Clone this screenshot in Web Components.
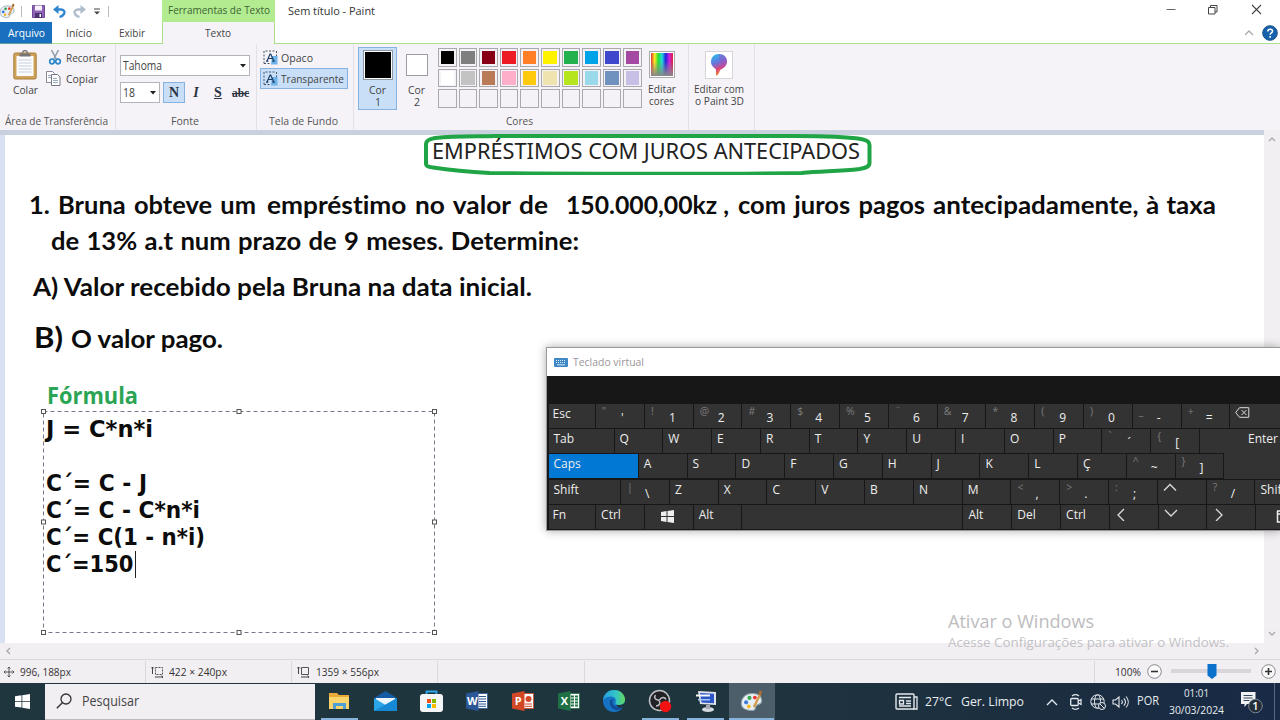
<!DOCTYPE html>
<html lang="pt">
<head>
<meta charset="utf-8">
<title>Sem título - Paint</title>
<style>
html,body{margin:0;width:1280px;height:720px;overflow:hidden;background:#fff}
body{font-family:"Open Sans","Noto Sans",sans-serif;font-size:12px;color:#333}
</style>
</head>
<body>
<paint-desktop></paint-desktop>
<script>
const define=(name,html,after)=>customElements.define(name,class extends HTMLElement{
  connectedCallback(){
    if(this.shadowRoot)return;
    this.attachShadow({mode:'open'}).innerHTML=typeof html==='function'?html(this):html;
    if(after)after(this);
  }
});
const T=(text,w,size=11.5,lh=16,style='')=>`<fit-text w="${w}" style="font-size:${size}px;line-height:${lh}px;${style}">${text}</fit-text>`;
const svg=(w,h,body,style='',vb)=>`<svg width="${w}" height="${h}" viewBox="${vb||`0 0 ${w} ${h}`}" style="display:block;flex:none;${style}" fill="none">${body}</svg>`;

/* Text run stretched or condensed to a given width */
define('fit-text',`<style>:host{display:block;flex:none;white-space:pre;font-variant-ligatures:none}span{display:inline-block;transform-origin:0 0;white-space:pre}</style><span><slot></slot></span>`,el=>{
  const w=+el.getAttribute('w'),s=el.shadowRoot.querySelector('span');
  el.style.width=w+'px';
  const n=s.getBoundingClientRect().width;
  if(n)s.style.transform=`scaleX(${w/n})`;
});

const palette=`<path d="M1 10C1 5 5 2 10 2.500c4 .3 6 2.500 6 5.500 0 3-3 2-4 3.500s0 3.500-3 3.500C4 15 1 13 1 10Z" fill="#e8eef2" stroke="#8da3b0" stroke-width=".8"/><circle cx="4.500" cy="9" r="1.500" fill="#3b78d8"/><circle cx="7" cy="5.700" r="1.500" fill="#35a853"/><circle cx="11" cy="5.500" r="1.400" fill="#e33"/><circle cx="6.500" cy="12" r="1.400" fill="#f3b921"/><path d="m9.500 12 4.500-9 1.500.8L11 13Z" fill="#d59a4b"/><path d="m13.500 3 1-3 2 1-1 3Z" fill="#a86c34"/>`;

define('title-bar',`<style>
:host{display:flex;height:22px;background:#fff;flex:none}
.quick{width:162px;display:flex;align-items:center}
.ctx{width:113px;background:#b3ec90;display:flex;justify-content:center;color:#3c6334}
.t{flex:1;display:flex;padding-left:13px;color:#333}
.win{display:flex;padding-top:4px}
i{width:1px;height:11px;background:#bbb}
</style>
<div class="quick">
${svg(16,16,palette,'margin-left:-1px','0 0 17 16')}<i style="margin-left:6px"></i>
${svg(13,13,'<path d="M.5.5h12v12H.5Z" fill="#8e63b5" stroke="#6f4a94"/><path d="M3 .5h7v5H3Z" fill="#f6f1fa"/><path d="M3 8h7v5H3Z" fill="#4d3470"/><path d="M7.500 9h1.500v3H7.500Z" fill="#fff"/>','margin-left:10px')}
${svg(13,13,'<path d="M3 4.500h5c5.500.5 4 6-1.500 7.500" stroke="#2f86cf" stroke-width="2.300"/><path d="M0 4.500 5.500 0v9Z" fill="#2f86cf"/>','margin-left:8px')}
${svg(13,13,'<path d="M10 4.500H5c-5.500.5-4 6 1.500 7.500" stroke="#aebccb" stroke-width="2.300"/><path d="M13 4.500 7.500 0v9Z" fill="#aebccb"/>','margin-left:7px')}
${svg(8,8,'<path d="M1 1h6" stroke="#444"/><path d="M1 3.500h6L4 6.500Z" fill="#444"/>','margin-left:7px;margin-top:2px')}<i style="margin-left:7px"></i>
</div>
<div class="ctx">${T('Ferramentas de Texto',102,11.5,19)}</div>
<div class="t">${T('Sem título - Paint',87,11.5,22)}</div>
<div class="win">${svg(110,14,'<path d="M2.500 5.500h9" stroke="#666"/><path d="M44.500 3.500h6.500v6.500h-6.500ZM46.500 3.500v-2h6.500v6.500h-2" stroke="#444"/><path d="m88 1 9 9m0-9-9 9" stroke="#444" stroke-width="1.100"/>','margin-right:6px')}</div>`);

define('ribbon-tabs',`<style>
:host{display:flex;height:22px;flex:none;box-sizing:border-box}
div{box-sizing:border-box;border-bottom:1px solid #abdf8c;display:flex;justify-content:center;color:#444}
.file{width:52px;background:#1a6fbe;color:#fff;border-color:#5b9c9c}
.on{width:113px;background:#f5f3f8;border:1px solid #abdf8c;border-width:0 1px;padding-right:2px}
.rest{flex:1;justify-content:flex-end;align-items:center}
</style>
<div class="file">${T('Arquivo',37,11.5,21)}</div>
<div style="width:53px">${T('Início',26,11.5,21)}</div>
<div style="width:57px;padding-right:3px">${T('Exibir',26,11.5,21)}</div>
<div class="on">${T('Texto',26,11.5,21)}</div>
<div class="rest">${svg(34,18,'<path d="m0 11 4-4 4 4" stroke="#aaa" stroke-width="1.300"/><circle cx="25" cy="9" r="7.300" fill="#1762ad" stroke="#1b4f87"/><path d="M22.800 7.500c0-3 4.700-3 4.700-.3 0 1.800-2.300 1.700-2.300 3.500m0 1.200v1.800" stroke="#fff" stroke-width="1.600"/>','margin-right:1px')}</div>`);

define('ribbon-group',el=>`<style>
:host{display:flex;flex-direction:column;box-sizing:border-box;height:86px;border-right:1px solid #e3e0e8;flex:none;width:${el.getAttribute('width')}px;color:#444}
.c{height:69px;display:flex;box-sizing:border-box}
.l{display:flex;justify-content:center;color:#555;padding-right:3px}
</style><div class="c"><slot></slot></div><div class="l">${el.getAttribute('lw')?T(el.getAttribute('label'),el.getAttribute('lw'),11.3,16):''}</div>`);

define('color-swatch',el=>`<style>:host{display:block;box-sizing:border-box;width:18.600px;height:18.600px;border:1px solid #a9a8ad;padding:1.500px;background:#f4f2f7}
div{height:100%;background:${el.getAttribute('color')||'transparent'}}</style><div></div>`);

const board=svg(24,30,'<rect x=".8" y="3" width="22.400" height="26" rx="1.500" fill="#cfa25a" stroke="#a97d3c"/><path d="M3.500 6h17v20h-17Z" fill="#fdfdff"/><path d="M5.500 10h13M5.500 13h13M5.500 16h13M5.500 19h13M5.500 22h13" stroke="#c4cfdc"/><path d="M6.500 3.500h11v3h-11Z" fill="#777"/><path d="M9.500 3.500c0-4 5-4 5 0" stroke="#777" stroke-width="1.300"/>');
const bgIcon=c=>svg(15,15,`<path d="M1 13.500V1h12" stroke="#456" stroke-dasharray="2 1.500"/><path d="M13.500 1v5" stroke="#456" stroke-dasharray="2 1.500"/><path d="M1 13.500h7" stroke="#456" stroke-dasharray="2 1.500"/><path d="M9 6h5.500v8.500H8Z" fill="${c}"/><path d="m4 11 3.100-7h.6l3.100 7M5.500 8.500h4M3 11.200h2.300m4 0h2.500" stroke="#1d3e66" stroke-width="1.200"/>`);
const colors=['#000','#7f7f7f','#880015','#ed1c24','#ff7f27','#fff200','#22b14c','#00a2e8','#3f48cc','#a349a4','#fff','#c3c3c3','#b97a57','#ffaec9','#ffc90e','#efe4b0','#b5e61d','#99d9ea','#7092be','#c8bfe7',...Array(10).fill('')];

define('paint-ribbon',`<style>
:host{display:flex;height:86px;background:#f5f3f8;flex:none}
.col{display:flex;flex-direction:column}.row{display:flex}
.mid{align-items:center}
.box{box-sizing:border-box;border:1px solid #b5b3ba;background:#fff;display:flex;align-items:center;justify-content:space-between;padding:0 3px 0 2px}
.sel{box-sizing:border-box;background:#c8dff7;border:1px solid #86b2e0}
.b{display:flex;justify-content:center;align-items:center;width:22px;height:21px;font-family:"Liberation Serif",serif;font-weight:bold;font-size:14px;color:#2b3340}
.grid{display:grid;grid-template-columns:repeat(10,18.600px);gap:2px;align-content:start;margin:4px 0 0 10px}
</style>
<ribbon-group width="116" label="Área de Transferência" lw="103">
 <div class="col mid" style="margin:6px 0 0 12px;width:26px">${board}${T('Colar',25,11.5,16,'margin-top:2px')}</div>
 <div class="col" style="margin:6px 0 0 10px">
  <div class="row">${svg(14,15,'<path d="m3.500 0 5 9.500M10.500 0l-5 9.500" stroke="#8b9aa8" stroke-width="1.500"/><circle cx="4" cy="11.500" r="2.300" stroke="#2f86c8" stroke-width="1.700"/><circle cx="10" cy="11.500" r="2.300" stroke="#2f86c8" stroke-width="1.700"/>')}${T('Recortar',40,11.5,17,'margin:-1px 0 1px 4px')}</div>
  <div class="row" style="margin-top:4px">${svg(15,15,'<path d="M.5.5h6l2 2v9h-8Z" fill="#fff" stroke="#889"/><path d="M5.500 3.500h6l2.500 2.500v8.500H5.500Z" fill="#fff" stroke="#778"/><path d="M7 7.500h4M7 9.500h5M7 11.500h5M2 4.500h3M2 6.500h3" stroke="#9ab"/>','margin-left:-2px')}${T('Copiar',32,11.5,17,'margin:-1px 0 1px 5px')}</div>
 </div>
</ribbon-group>
<ribbon-group width="141" label="Fonte" lw="28">
 <div class="col" style="margin:11px 0 0 4px">
  <div class="box" style="width:130px;height:21px">${T('Tahoma',39,12,18)}${svg(6,4,'<path d="M0 0h6L3 3.500Z" fill="#222"/>')}</div>
  <div class="row" style="margin-top:6px">
   <div class="box" style="width:40px;height:21px">${T('18',12,12,18)}${svg(6,4,'<path d="M0 0h6L3 3.500Z" fill="#222"/>')}</div>
   <div class="b sel" style="margin-left:3px">N</div><div class="b" style="font-style:italic">I</div><div class="b" style="text-decoration:underline">S</div><div class="b" style="text-decoration:line-through;font-size:11.500px;width:23px">abc</div>
  </div>
 </div>
</ribbon-group>
<ribbon-group width="97" label="Tela de Fundo" lw="69">
 <div class="col" style="margin:3px 0 0 3px">
  <div class="row" style="height:21px;padding:3px 0 0 3px;box-sizing:border-box">${bgIcon('#6db3ea')}${T('Opaco',32,11.5,16,'margin-left:3px')}</div>
  <div class="row sel" style="width:88px;height:21px;padding:2px 0 0 2px">${bgIcon('#6db3ea')}${T('Transparente',63,11.5,16,'margin-left:3px')}</div>
 </div>
</ribbon-group>
<ribbon-group width="335" label="Cores" lw="27">
 <div class="col mid sel" style="margin:3px 0 0 4px;width:39px;height:63px;padding-top:2px">
  <div style="width:26px;height:26px;background:#000;border:1px solid #fff;outline:1px solid #8d98a6;margin-top:1px"></div>
  ${T('Cor',17,11.5,12,'margin-top:5px')}${T('1',6,11.5,12)}
 </div>
 <div class="col mid" style="margin:10px 0 0 8px;width:23px">
  <div style="width:20px;height:20px;background:#fff;border:1px solid #9e9ca3"></div>
  ${T('Cor',17,11.5,12,'margin-top:8px')}${T('2',6,11.5,12)}
 </div>
 <div class="grid">${colors.map(c=>`<color-swatch color="${c}"></color-swatch>`).join('')}</div>
 <div class="col mid" style="margin:7px 0 0 6px;width:28px">
  <div style="width:22px;height:23px;border:1px solid #aaa;padding:1px;background:#fff"><div style="width:100%;height:100%;background:linear-gradient(#8880 35%,#888),linear-gradient(90deg,#d33,#fe2,#2d3,#2dd,#22d,#c2d,#d23)"></div></div>
  ${T('Editar',28,11.5,12,'margin-top:5px')}${T('cores',25,11.5,12)}
 </div>
</ribbon-group>
<ribbon-group width="66" label="" lw="">
 <div class="col mid" style="margin:7px 0 0 5px;width:50px">
  <div style="width:26px;height:26px;border:1px solid #d7d5da;background:#fff;display:flex;justify-content:center;align-items:center"><svg width="18" height="24" viewBox="0 0 18 24"><defs><linearGradient id="g" x1="0" y1="0" x2=".3" y2="1"><stop stop-color="#22c6ec"/><stop offset=".45" stop-color="#6476df"/><stop offset=".75" stop-color="#e0457a"/><stop offset="1" stop-color="#f08b2a"/></linearGradient></defs><path d="M9 1C4 1 1 4.500 1 9c0 4 3 5.500 5 7.500V23c2-1 3.500-3 4-6 3-1.500 7-4 7-8.500C17 4 13.500 1 9 1Z" fill="url(#g)"/><path d="M9 1c5 0 8 3 8 7.500 0 4-3 6-6 7.500Z" fill="#a04fc4" opacity=".45"/></svg></div>
  ${T('Editar com',50,11.5,12,'margin-top:4px')}${T('o Paint 3D',49,11.5,12)}
 </div>
</ribbon-group>`);

define('canvas-text',el=>`<style>:host{position:absolute;display:flex;left:${el.getAttribute('x')}px;top:${el.getAttribute('y')}px}</style><slot></slot>`);

const lato='font-family:Lato,sans-serif;font-weight:bold;word-spacing:2px;color:#0c0c0c;';
const dv='font-family:\'DejaVu Sans\',sans-serif;font-weight:bold;color:#0c0c0c;';
define('text-selection',`<style>
:host{position:absolute;display:block;left:41px;top:409px;width:397px;height:227px}
svg{position:absolute;left:0;top:0}
.lines{padding:6.500px 0 0 5px}
.row{display:flex;height:27.200px}
i{width:1px;height:27px;background:#222;margin-left:1px}
</style>
<svg width="397" height="227" fill="none"><rect x="2.500" y="2.500" width="391" height="221" stroke="#77788a" stroke-dasharray="4 3"/>
${[[2.5,2.5],[198,2.5],[393.5,2.5],[2.5,113],[393.5,113],[2.5,223.5],[198,223.5],[393.5,223.5]].map(([x,y])=>`<rect x="${x-2}" y="${y-2}" width="4" height="4" fill="#fff" stroke="#555"/>`).join('')}</svg>
<div class="lines">
<div class="row">${T('J = C*n*i',107,22.5,27,dv)}</div>
<div class="row"></div>
<div class="row">${T('C´= C - J',101,22.5,27,dv)}</div>
<div class="row">${T('C´= C - C*n*i',154,22.5,27,dv)}</div>
<div class="row">${T('C´= C(1 - n*i)',159,22.5,27,dv)}</div>
<div class="row">${T('C´=150',87.5,22.5,27,dv)}<i></i></div>
</div>`);

define('paint-canvas',`<style>
:host{display:grid;grid-template:5px 508px 16px/5px 1259px 16px;width:1280px;height:529px;flex:none;background:#f2eff3}
.top{grid-area:1/1/2/3;background:#c9d0de}.left{grid-area:2/1;background:#d9e0f2}
.page{grid-area:2/2;background:#fff}
.v{grid-area:1/3/3/4;display:flex;flex-direction:column;justify-content:space-between;align-items:center;padding:6px 0;background:#f2eff3}
.h{grid-area:3/1/4/3;display:flex;justify-content:space-between;align-items:center;padding:0 4px 0 5px}
</style>
<div class="top"></div><div class="left"></div><div class="page"></div>
<div class="v">${svg(8,6,'<path d="m1 5 3-3 3 3" stroke="#aaa" stroke-width="1.400"/>')}${svg(8,6,'<path d="m1 1 3 3 3-3" stroke="#aaa" stroke-width="1.400"/>')}</div>
<div class="h">${svg(6,8,'<path d="M5 1 2 4l3 3" stroke="#aaa" stroke-width="1.400"/>')}${svg(6,8,'<path d="m1 1 3 3-3 3" stroke="#aaa" stroke-width="1.400"/>')}</div>
<canvas-text x="423" y="133">${svg(450,42,'<path d="M3 31V11c0-3 3-5 9-6 20-2 40-1.500 60-2h300c30 0 50 .5 66 3 6 1 8.500 3 8.500 6v18c0 4-4 5-10 6-20 2.500-35 2-58 4-100 1.500-230 .5-312 0C40 38.500 20 36 10 34.500 5 34 3 33 3 31Z" stroke="#1fa545" stroke-width="4"/>')}</canvas-text>
<canvas-text x="432" y="137">${T('EMPRÉSTIMOS COM JUROS ANTECIPADOS',428,22.5,28,"font-family:'Noto Sans',sans-serif;color:#222")}</canvas-text>
<canvas-text x="29" y="190">${T('1. Bruna obteve um',227,24,30,lato)}${T('empréstimo no valor de',281,24,30,lato+'margin-left:11px')}${T('150.000,00kz ,',163,24,30,lato+'word-spacing:0;margin-left:18px')}${T('com juros pagos',187,24,30,lato+'margin-left:9px')}${T('antecipadamente, à taxa',283,24,30,lato+'word-spacing:1px;margin-left:8px')}</canvas-text>
<canvas-text x="51" y="225.500">${T('de 13% a.t num prazo de 9 meses. Determine:',528,24,30,lato+'word-spacing:1px')}</canvas-text>
<canvas-text x="33" y="271.500">${T('A) Valor recebido pela Bruna na data inicial.',499,24,30,lato+'word-spacing:0')}</canvas-text>
<canvas-text x="34" y="321">${T('B)',29,29,32,lato)}${T('O valor pago.',152,24,36,lato+'word-spacing:0;margin-left:8px')}</canvas-text>
<canvas-text x="47" y="381">${T('Fórmula',91,22.5,30,'font-weight:bold;color:#2ba454')}</canvas-text>
<text-selection></text-selection>
<canvas-text x="948" y="609">${T('Ativar o Windows',146,18.5,24,'color:#bdbcc0')}</canvas-text>
<canvas-text x="948" y="633">${T('Acesse Configurações para ativar o Windows.',281,13.5,18,'color:#c2c1c5')}</canvas-text>`);

define('osk-key',el=>{
const a=n=>el.getAttribute(n)||'',s=el.hasAttribute('sub');
return `<style>:host{display:block;box-sizing:border-box;flex:none;width:${a('w')||48.8}px;height:24px;border-right:1.500px solid #171717;background:${el.hasAttribute('on')?'#0078d4':'#333'};color:#eee;font-size:12px;line-height:16px;padding:${s?6:2}px 0 0 ${s?(a('o')||24):(a('p')||5)}px;position:relative;white-space:pre;background-clip:padding-box}
.s{position:absolute;left:6px;top:-1px;color:#7c7c7c;font-size:10.500px}</style>${s?`<span class="s">${a('sub').replace('<','&lt;')}</span>`:''}<slot></slot>`});
const K=(l,w='',x='')=>`<osk-key ${w?`w="${w}"`:''} ${x}>${l}</osk-key>`;
const S=(s,l,x='')=>K(l,'',`sub="${s}" ${x}`);
const arrow=d=>svg(14,14,`<path d="${d}" stroke="#ddd" stroke-width="1.300"/>`);
define('osk-window',`<style>
:host{position:absolute;left:546px;top:347px;width:734px;height:184px;display:block;box-sizing:border-box;overflow:hidden;background:#171717;border:1px solid #999;border-right:0;box-shadow:0 0 9px #0005}
.t{height:28px;background:#fff;display:flex;align-items:center;padding-left:8px;color:#9a969a;font-size:12px}
.k{padding:28px 0 0 1.500px;display:flex;flex-direction:column;gap:1.200px}.r{display:flex}
.e{width:60px;height:26px;background:#333}
</style>
<div class="t">${svg(14,9,'<rect width="14" height="9" rx="1" fill="#3f88c5"/><path d="M2 2.500h10M2 4.500h10" stroke="#d8eaf8" stroke-dasharray="1 1"/><path d="M3 6.800h8" stroke="#d8eaf8"/>','margin-left:-1px')}${T('Teclado virtual',71,11.5,18,'margin-left:5px')}</div>
<div class="k">
<div class="r">${K('Esc',47.6,'p="4"')}${S('&quot;',"'",'o="25"')}${[['!','1'],['@','2'],['#','3'],['$','4'],['%','5'],['¨','6'],['&amp;','7'],['*','8'],['(','9'],[')','0'],['_','-'],['+','=']].map(v=>S(...v)).join('')}${K(svg(15,11,'<path d="M4.500.7h9.300v9.600H4.500L.7 5.500Z" stroke="#ddd"/><path d="m6.500 3 5 5m0-5-5 5" stroke="#ddd"/>','margin-top:1px'),60)}</div>
<div class="r">${K('Tab',66)}${[...'QWERTYUIOP'].map(c=>K(c)).join('')}${S('`','´','o="25"')}${S('{','[')}${K('Enter',90,'p="48"')}</div>
<div class="r">${K('Caps',90.3,'on')}${[...'ASDFGHJKLÇ'].map(c=>K(c)).join('')}${S('^','~')}${S('}',']')}<div class="e" style="margin-top:-1.500px"></div></div>
<div class="r">${K('Shift',72.6)}${S('|','\\')}${[...'ZXCVBNM'].map(c=>K(c)).join('')}${S('&lt;',',')}${S('&gt;','.')}${S(':',';')}${K(arrow('m1 8.500 6-6 6 6'))}${S('?','/')}${K('Shift',60)}</div>
<div class="r">${K('Fn',47.6,'p="4"')}${K('Ctrl')}${K(svg(13,13,'<path d="M0 2 5.500 1v5H0ZM6.500.9 13 0v6H6.500ZM0 7h5.500v5L0 11ZM6.500 7H13v6l-6.500-.9Z" fill="#eee"/>','margin-top:3px'),'','p="16"')}${K('Alt')}${K('',221)}${K('Alt')}${K('Del')}${K('Ctrl')}${K(arrow('m9 2-6 6 6 6'))}${K(arrow('m1 3 6 6 6-6'))}${K(arrow('m4 2 6 6-6 6'))}${K(svg(14,13,'<path d="M1 1h13M1 4h13M1.500 1v11H14" stroke="#eee" stroke-width="1.500"/><path d="M4 7h5v3H4Z" fill="#eee"/>','margin-top:3px'),60,'p="20"')}</div>
</div>`);

define('status-bar',`<style>
:host{display:flex;height:24px;box-sizing:border-box;flex:none;background:#f2eff3;border-top:1px solid #dad8dd;color:#333;align-items:center}
div{box-sizing:border-box;height:22px;border-right:1px solid #dbd9de;display:flex;align-items:center;flex:none}
.z{border:0;flex:1}
.tr{border:0;width:80px;height:15px;justify-content:center;background:linear-gradient(#0000 5px,#d8d6da 5px,#d8d6da 9px,#0000 9px);margin-left:9px}
</style>
<div style="width:146px;padding-left:4px">${svg(10,10,'<path d="M5 0v10M0 5h10M3.500 1.500 5 0l1.500 1.500M3.500 8.500 5 10l1.500-1.500M1.500 3.500 0 5l1.500 1.500M8.500 3.500 10 5 8.500 6.500" stroke="#555"/>')}${T('996, 188px',51,11.5,18,'margin-left:6px')}</div>
<div style="width:146px;padding-left:5px">${svg(13,12,'<path d="M1.500 1v7M0 2.500 1.500 1 3 2.500M4 11h8m-1.500-1.500L12 11l-1.500 1.500" stroke="#444"/><path d="M4.500 1.500h7v7h-7Z" stroke="#555" stroke-dasharray="2 1"/>')}${T('422 × 240px',58,11.5,18,'margin-left:5px')}</div>
<div style="width:146px;padding-left:5px">${svg(13,12,'<path d="M1.500 1v7M0 2.500 1.500 1 3 2.500M4 11h8m-1.500-1.500L12 11l-1.500 1.500" stroke="#444"/><path d="M4.500 1.500h7v7h-7Z" stroke="#555"/>')}${T('1359 × 556px',63,11.5,18,'margin-left:6px')}</div>
<div style="width:147px"></div><div style="width:510px"></div>
<div class="z">${T('100%',26,11.5,18,'margin-left:20px')}${svg(15,15,'<circle cx="7.500" cy="7.500" r="6.800" fill="#fafafa" stroke="#8a888d"/><path d="M4 7.500h7" stroke="#333" stroke-width="1.600"/>','margin-left:6px')}<div class="tr">${svg(10,15,'<path d="M.5 0h9v11.500L5 15 .5 11.500Z" fill="#0a72cb"/>','margin-left:2px')}</div>${svg(15,15,'<circle cx="7.500" cy="7.500" r="6.800" fill="#fafafa" stroke="#8a888d"/><path d="M4 7.500h7M7.500 4v7" stroke="#333" stroke-width="1.600"/>','margin-left:10px')}</div>`);

define('task-icon',el=>`<style>:host{display:flex;flex:none;flex-direction:column;align-items:center;justify-content:flex-end;width:45.750px;height:37px;${el.hasAttribute('active')?'background:#4c5e69':''}}
.i{height:35px;display:flex;align-items:center}.u{height:2px;width:${el.hasAttribute('active')?45:37}px;background:${el.hasAttribute('open')||el.hasAttribute('active')?'#86b4dc':'transparent'}}</style><div class="i"><slot></slot></div><div class="u"></div>`);
const office=(c,l,p)=>svg(22,20,`<path d="M10 2.500h11.500v15H10Z" fill="#fff" stroke="${c}" stroke-width=".8"/>${p}<path d="M0 2.500 12.500 0v20L0 17.500Z" fill="${c}"/><text x="6.300" y="14" font-size="11" font-weight="bold" font-family="Open Sans" fill="#fff" text-anchor="middle">${l}</text>`);
define('task-bar',`<style>
:host{display:flex;height:37px;flex:none;background:linear-gradient(90deg,#1f363f,#1f353e 55%,#1b2d40 85%,#182a46);color:#e8edf0;align-items:center}
.s{width:45px;display:flex;justify-content:center}
.q{width:270px;height:36px;box-sizing:border-box;background:#f2eff3;display:flex;align-items:center;padding-left:11px;color:#444;border-bottom:1px solid #bbb}
.tr{display:flex;flex:1;align-items:center;height:37px;padding-left:120px}
.c{display:flex;flex-direction:column;align-items:center;width:56px;margin:-1px 0 0 10px}
</style>
<div class="s">${svg(15,15,'<path d="M0 2.200 6.500 1.300v5.700H0ZM7.300 1.200 15 0v7H7.300ZM0 7.800h6.500v5.800L0 12.700ZM7.300 7.800H15v7.200l-7.700-1.200Z" fill="#fff"/>')}</div>
<div class="q">${svg(16,16,'<circle cx="10" cy="6" r="5" stroke="#333" stroke-width="1.300"/><path d="M6.300 9.700.8 15.200" stroke="#333" stroke-width="1.400"/>')}${T('Pesquisar',57,14,20,'margin-left:10px')}</div>
<div style="display:flex;margin-left:2px">
<task-icon open>${svg(21,18,'<path d="M0 1h8l2 2h10v13H0Z" fill="#e9ab35"/><path d="M0 5h20v12H0Z" fill="#fbd46b"/><path d="M4 17v-6h13v6h-3v-3H7v3Z" fill="#4d9fd6"/>')}</task-icon>
<task-icon>${svg(23,20,'<path d="M0 7 11.500 0 23 7v13H0Z" fill="#145ba5"/><path d="M2 7h19v8H2Z" fill="#edf5fb"/><path d="M0 7l11.500 7L23 7v13H0Z" fill="#2aa5e8"/><path d="M0 20 23 7v13Z" fill="#1788d4"/>')}</task-icon>
<task-icon>${svg(23,22,'<path d="M6.500 5V1.500h10V5" stroke="#2fa8ea" stroke-width="1.800"/><rect y="4" width="23" height="18" rx="3" fill="#f4f5f7"/><path d="M7 9h4v4H7Z" fill="#f25022"/><path d="M12 9h4v4h-4Z" fill="#7fba00"/><path d="M7 14h4v4H7Z" fill="#00a4ef"/><path d="M12 14h4v4h-4Z" fill="#ffb900"/>')}</task-icon>
<task-icon>${office('#2b5797','W','<path d="M13 5.500h7M13 8h7M13 10.500h7M13 13h7M13 15.300h7" stroke="#2b5797"/>')}</task-icon>
<task-icon>${office('#d24726','P','<circle cx="16.500" cy="8" r="3" fill="#d24726"/><path d="M13 13h7M13 15.300h7" stroke="#d24726"/>')}</task-icon>
<task-icon>${office('#1e7145','X','<path d="M13 5.500h7M13 8.500h7M13 11.500h7M13 14.500h7" stroke="#1e7145" stroke-width="1.800"/><path d="M16.500 3v14" stroke="#fff"/>')}</task-icon>
<task-icon><svg width="24" height="24" viewBox="0 0 24 24"><defs><linearGradient id="e"><stop stop-color="#239fe0"/><stop offset=".6" stop-color="#35c5c5"/><stop offset="1" stop-color="#63d85a"/></linearGradient></defs><circle cx="12" cy="12" r="11" fill="#1673c4"/><path d="M1 11C2 4 7 1 12 1c7 0 11 5 11 9.500 0 4-3 5.500-6 5.500-3 0-4-1-3.500-2.500C15 10 12 7 8 7.500 4 8 2 9.500 1 11Z" fill="url(#e)"/><path d="M8 12c-1 4 2 8.500 7 9 3 0 5-1.500 6.500-3.500-5 2-11 .5-11-4.500 0-1 .2-2 1-2.500-1.500-.3-3 0-3.500 1.500Z" fill="#124a94"/><path d="M17 16c3 0 5.500-1 6.500-4v6l-3 .500c-3 1-5.500-.5-6.500-2.500Z" fill="#1f353e"/></svg></task-icon>
<task-icon open>${svg(24,24,'<circle cx="11.500" cy="11.500" r="10" fill="#222126" stroke="#bfc2c5" stroke-width="1.500"/><path d="M11 11c-3.500.5-5.500-2.500-3.500-5M11.500 11c2-3.500 5.500-3 6.500-.5M11 11.500c2 2.500.5 5.500-3 5.500" stroke="#bfc2c5" stroke-width="1.500"/><circle cx="17.500" cy="17.500" r="5.700" fill="#f31212"/>')}</task-icon>
<task-icon open>${svg(24,24,'<ellipse cx="14" cy="20.500" rx="6" ry="2.500" fill="#d5dade"/><path d="m4 2 18 1v13L6 15Z" fill="#dfe5ea"/><path d="m6 4 14 .8v9.500L7.500 13.500Z" fill="#2c55c8"/><path d="M2 5.500h14v2H2Z" fill="#f4f6f8"/><path d="M4 10h12v1.500H4Z" fill="#aac8f0"/><path d="M12 16h4v4h-4Z" fill="#aab"/>')}</task-icon>
<task-icon active>${svg(23,22,palette,'','0 0 17 16')}</task-icon></div>
<div class="tr">
${svg(23,17,'<rect x="1" y="1" width="18" height="15" rx="1" stroke="#e6eaee" stroke-width="1.400"/><path d="M19 4h3v12h-4M4 4.500h12M11 8h5M11 10.500h5M4 13h12" stroke="#e6eaee" stroke-width="1.300"/><path d="M4.500 7.500h4v3.500h-4Z" stroke="#e6eaee" stroke-width="1.300"/>')}
${T('27°C',27,13,18,'margin:-1px 0 0 7px')}${T('Ger. Limpo',63,13,18,'margin:-1px 0 0 9px')}
${svg(12,8,'<path d="m1 7 5-5 5 5" stroke="#e6eaee" stroke-width="1.300"/>','margin-left:22px')}
${svg(12,16,'<rect x=".7" y="4.500" width="7.500" height="7" rx="1" stroke="#e6eaee" stroke-width="1.300"/><path d="m8.500 7 2.500-1.500v5L8.500 9M2 2c2-1.500 5-1.500 7 0M2 14c2 1.500 5 1.500 7 0" stroke="#e6eaee" stroke-width="1.200"/>','margin-left:12px')}
${svg(17,16,'<circle cx="7.500" cy="7.500" r="6.700" stroke="#e6eaee"/><ellipse cx="7.500" cy="7.500" rx="3" ry="6.700" stroke="#e6eaee"/><path d="M1 5h13M1 10h9" stroke="#e6eaee"/><circle cx="12" cy="12" r="3.500" fill="#1b2d40" stroke="#e6eaee"/><path d="m9.800 9.800 4.400 4.400" stroke="#e6eaee"/>','margin-left:8px')}
${svg(17,14,'<path d="M1 5h2.500L7 2v10L3.500 9H1ZM9.500 5c1 1.200 1 2.800 0 4M11.800 3.300c2 2.200 2 5.200 0 7.400M14 1.500c3 3.300 3 7.700 0 11" stroke="#e6eaee" stroke-width="1.100"/>','margin-left:5px')}
${T('POR',22,12,18,'margin:-1px 0 0 8px')}
<div class="c">${T('01:01',25,11.5,17)}${T('30/03/2024',55,11.5,17)}</div>
${svg(24,25,'<path d="M1 3h14.500v12H7l-2.500 3v-3H1Z" fill="#f0f2f4"/><path d="M3.500 6.500h9M3.500 9h9M3.500 11.500h6" stroke="#34465a"/><circle cx="15.500" cy="17" r="6.800" fill="#222d38" stroke="#7d8792"/><text x="15.500" y="21" font-size="11" font-family="Open Sans" font-weight="600" text-anchor="middle" fill="#fff">1</text>','margin-left:15px')}
<div style="width:1px;height:37px;background:#5a6a7c;margin-left:10px"></div>
</div>`);

define('paint-desktop',`<style>:host{display:flex;flex-direction:column;width:1280px;height:720px;overflow:hidden;position:relative}</style>
<title-bar></title-bar><ribbon-tabs></ribbon-tabs><paint-ribbon></paint-ribbon>
<paint-canvas></paint-canvas><status-bar></status-bar><task-bar></task-bar><osk-window></osk-window>`);
</script>
</body>
</html>
